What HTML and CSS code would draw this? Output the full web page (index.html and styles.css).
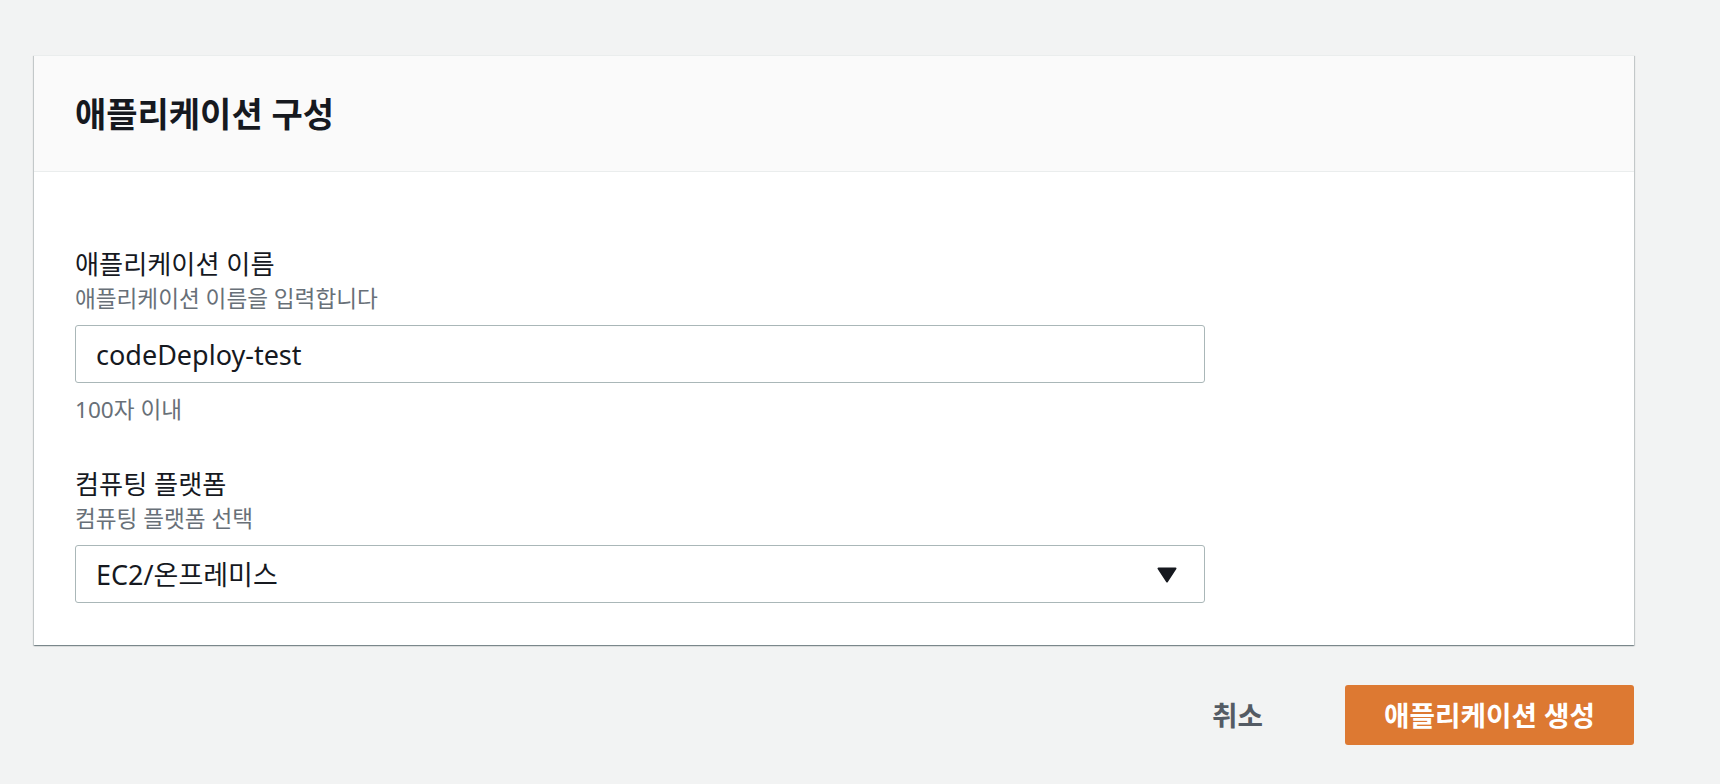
FILE: index.html
```html
<!DOCTYPE html>
<html lang="ko">
<head>
<meta charset="utf-8">
<title>애플리케이션 구성</title>
<link rel="stylesheet" href="styles.css">
</head>
<body>
<main class="page">
  <section class="card">
    <header class="card-header">
      <h2 class="card-title">애플리케이션 구성</h2>
    </header>
    <div class="card-body">
      <div class="field">
        <label class="field-label" for="app-name">애플리케이션 이름</label>
        <div class="field-desc">애플리케이션 이름을 입력합니다</div>
        <input id="app-name" class="control" type="text" value="codeDeploy-test">
        <div class="field-constraint">100자 이내</div>
      </div>
      <div class="field field-second">
        <label class="field-label" for="platform">컴퓨팅 플랫폼</label>
        <div class="field-desc">컴퓨팅 플랫폼 선택</div>
        <div class="select-wrap">
          <select id="platform" class="control select">
            <option>EC2/온프레미스</option>
          </select>
          <svg class="select-arrow" width="20" height="16" viewBox="0 0 20 16" aria-hidden="true">
            <path d="M1.5 1.5 L18.5 1.5 L10 14.5 Z" fill="#16191f" stroke="#16191f" stroke-width="2" stroke-linejoin="round"/>
          </svg>
        </div>
      </div>
    </div>
  </section>
  <div class="actions">
    <button class="btn btn-link" type="button">취소</button>
    <button class="btn btn-primary" type="button">애플리케이션 생성</button>
  </div>
</main>
</body>
</html>
```
FILE: styles.css
```css
* { box-sizing: border-box; }

html, body {
  margin: 0;
  padding: 0;
  background: #f2f3f3;
  font-family: "Noto Sans", "Noto Sans CJK KR", sans-serif;
  color: #16191f;
}

.page {
  padding: 55px 86px 0 34px;
}

.card {
  background: #ffffff;
  border-top: 1px solid #eaeded;
  box-shadow: 0 1px 1px 0 rgba(0, 28, 36, 0.3),
              1px 1px 1px 0 rgba(0, 28, 36, 0.15),
              -1px 1px 1px 0 rgba(0, 28, 36, 0.15);
}

.card-header {
  height: 116px;
  display: flex;
  align-items: center;
  padding-left: 41px;
  background: #fafafa;
  border-bottom: 1px solid #eaeded;
}

.card-title {
  margin: 0;
  font-size: 34px;
  font-weight: 700;
  line-height: 44px;
  color: #16191f;
}

.card-body {
  padding: 75px 41px 42px;
}

.field-label {
  display: block;
  font-size: 26.2px;
  line-height: 34px;
  color: #16191f;
}

.field-desc {
  margin-top: 3px;
  font-size: 22.6px;
  line-height: 30px;
  color: #687078;
}

.field-constraint {
  margin-top: 12px;
  font-size: 22.6px;
  line-height: 30px;
  color: #687078;
}

.field-second {
  margin-top: 42px;
}

.control {
  display: block;
  width: 1130px;
  height: 58px;
  margin-top: 11px;
  padding: 0 20px;
  border: 1px solid #aab7b8;
  border-radius: 3px;
  background: #ffffff;
  font-family: "Noto Sans", "Noto Sans CJK KR", sans-serif;
  font-size: 27px;
  color: #16191f;
  outline: none;
}

.select-wrap {
  position: relative;
  width: 1130px;
}

.select {
  appearance: none;
  -webkit-appearance: none;
}

.select-arrow {
  position: absolute;
  right: 28px;
  top: 22px;
}

.actions {
  display: flex;
  justify-content: flex-end;
  align-items: center;
  gap: 62px;
  margin-top: 40px;
}

.btn {
  font-family: "Noto Sans", "Noto Sans CJK KR", sans-serif;
  font-size: 27.7px;
  font-weight: 700;
  border: none;
  cursor: pointer;
  height: 60px;
  line-height: 60px;
}

.btn-link {
  background: transparent;
  color: #545b64;
  padding: 0 20px;
}

.btn-primary {
  background: #dd7932;
  color: #ffffff;
  border-radius: 3px;
  padding: 0 39px;
}
```
